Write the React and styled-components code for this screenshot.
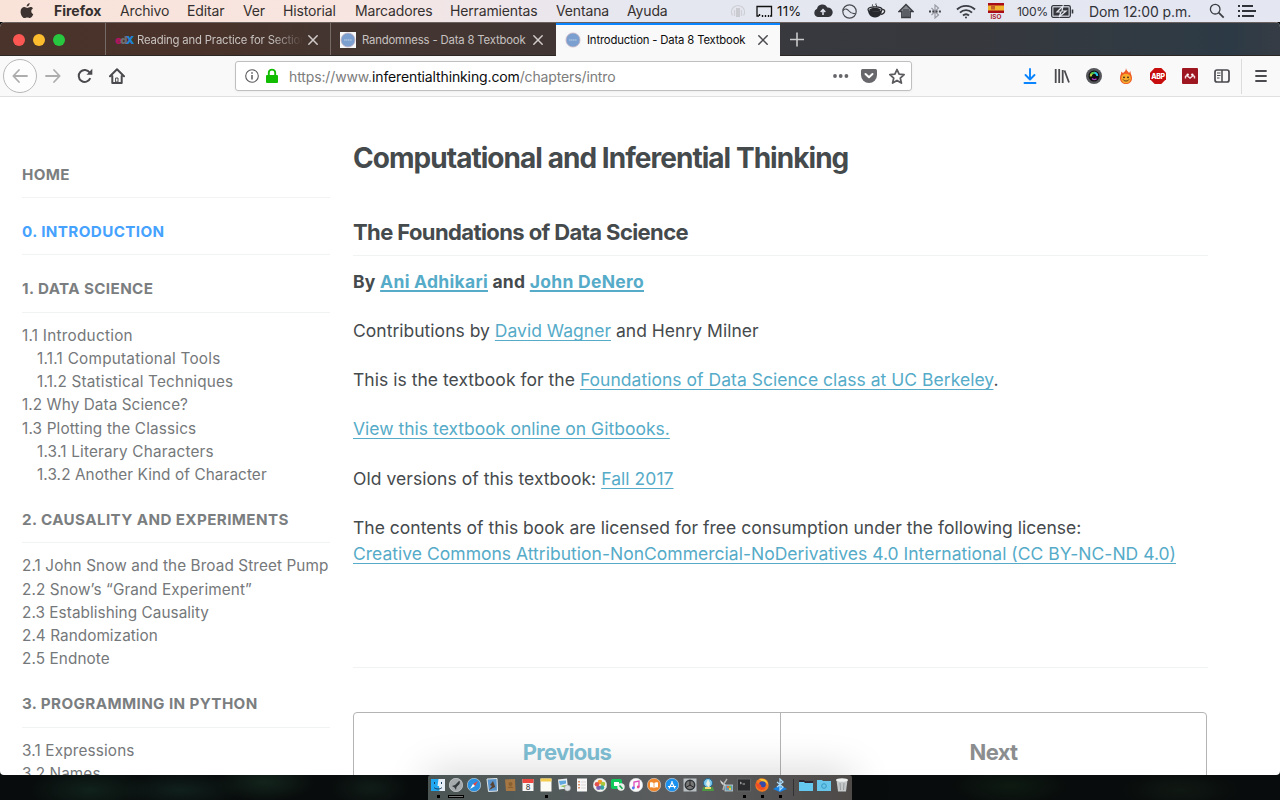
import React from "react";
import styled, { createGlobalStyle } from "styled-components";

const Global = createGlobalStyle`
  * { box-sizing: border-box; }
  body { margin: 0; background: #080d0c; font-family: Inter, "Liberation Sans", sans-serif; overflow: hidden; }
  svg { display: block; flex: none; }
`;

const Desktop = styled.div`
  position: relative;
  width: 1280px;
  height: 800px;
  overflow: hidden;
  display: flex;
  flex-direction: column;
  background:
    radial-gradient(ellipse 60px 22px at 90px 790px, #10211b, transparent),
    radial-gradient(ellipse 50px 20px at 265px 782px, #13241c, transparent),
    radial-gradient(ellipse 60px 18px at 180px 790px, #10201c, transparent),
    radial-gradient(ellipse 40px 20px at 370px 788px, #101c18, transparent),
    radial-gradient(ellipse 60px 20px at 1010px 786px, #0e1a12, transparent),
    radial-gradient(ellipse 60px 20px at 1180px 790px, #101813, transparent),
    #080c0c;
`;

const MenuBar = styled.header`
  height: 22px;
  flex: none;
  display: flex;
  align-items: center;
  background: linear-gradient(90deg, #f9e3d9 0, #f8e5e0 330px, #eee6ea 500px, #e5e7f0 640px, #e4e7f1 100%);
  color: #35302f;
`;

const Slot = styled.div`
  width: ${(p) => p.$w}px;
  flex: none;
  display: flex;
  align-items: center;
  white-space: nowrap;
`;

const AppleSlot = styled(Slot)`
  padding-left: 20px;
`;

const MenuItem = styled(Slot)`
  font-size: 14px;
  font-weight: ${(p) => (p.$bold ? 700 : 400)};
  letter-spacing: ${(p) => p.$ls ?? 0}px;
  line-height: 22px;
`;

const StatusText = styled(Slot)`
  font-size: ${(p) => p.$size ?? 14}px;
  letter-spacing: ${(p) => p.$ls ?? 0}px;
  color: ${(p) => p.$color ?? "#303239"};
`;

const Window = styled.main`
  height: 753px;
  flex: none;
  display: flex;
  flex-direction: column;
  border-radius: 5px 5px 4px 4px;
  overflow: hidden;
  background: #fff;
`;

const TabStrip = styled.div`
  height: 34px;
  flex: none;
  display: flex;
  border-top: 1px solid #6b6260;
  border-bottom: 1px solid #2b2725;
  background: linear-gradient(90deg, #4a332a 0, #493229 200px, #443530 330px, #413634 556px, #38393e 790px, #37383d 960px, #303a43 1150px, #2c3a45 1230px, #363c45 100%);
`;

const Lights = styled.div`
  width: 105px;
  display: flex;
  align-items: center;
  gap: 8px;
  padding: 2px 0 0 13px;
`;

const Light = styled.i`
  width: 12px;
  height: 12px;
  border-radius: 50%;
  background: ${(p) => p.$c};
`;

const Tab = styled.div`
  width: ${(p) => (p.$active ? 224 : 225)}px;
  margin-left: ${(p) => (p.$active ? 1 : 0)}px;
  height: ${(p) => (p.$active ? 33 : 32)}px;
  flex: none;
  display: flex;
  align-items: center;
  padding: ${(p) => (p.$active ? "0 0 1px 9px" : "2px 0 0 9px")};
  font-size: 11.3px;
  letter-spacing: -0.16px;
  color: ${(p) => (p.$active ? "#0c0c0d" : "#c7c2c0")};
  background: ${(p) => (p.$active ? "#f9f9f9" : "transparent")};
  border-left: ${(p) => (p.$active ? 0 : "1px solid #766a66")};
  border-top: ${(p) => (p.$active ? "2px solid #0a84ff" : 0)};
`;

const TabTitle = styled.span`
  width: 166px;
  margin: 0 4px 0 6px;
  overflow: hidden;
  white-space: nowrap;
  line-height: 18px;
  mask-image: ${(p) => (p.$fade ? "linear-gradient(90deg, #000 135px, transparent 166px)" : "none")};
`;

const EdxMark = styled.span`
  display: flex;
  width: 16px;
  font-size: 11px;
  font-weight: 800;
  letter-spacing: -1.5px;
  b:nth-child(1) { color: #b2155f; }
  b:nth-child(2) { color: #6a6d70; }
  b:nth-child(3) { color: #1f82d2; }
`;

const Toolbar = styled.div`
  height: 41px;
  flex: none;
  display: flex;
  align-items: center;
  background: #f9f9f9;
  border-bottom: 1px solid #e0e0e0;
  padding-left: 3px;
`;

const BackButton = styled.div`
  width: 34px;
  height: 34px;
  border-radius: 50%;
  border: 1px solid #b7b7b7;
  background: #fdfdfd;
  display: grid;
  place-items: center;
  margin-right: 8px;
`;

const AddressBar = styled.div`
  width: 677px;
  height: 30px;
  border: 1px solid #bfbfbf;
  border-radius: 3px;
  background: #fff;
  display: flex;
  align-items: center;
  padding-left: 9px;
  margin-right: 110px;
  box-shadow: 0 1px 3px rgba(0, 0, 0, 0.05);
`;

const Url = styled.span`
  width: 543px;
  font-size: 14px;
  letter-spacing: -0.13px;
  color: #7c7c7c;
  padding-top: 1px;
  white-space: nowrap;
  b { font-weight: 400; color: #0c0c0d; }
`;

const Separator = styled.i`
  width: 1px;
  height: 35px;
  background: #dcdcdc;
  margin-right: 13px;
`;

const Page = styled.div`
  flex: 1;
  min-height: 0;
  display: flex;
  overflow: hidden;
`;

const Sidebar = styled.nav`
  width: 331px;
  flex: none;
  padding: 65.8px 1px 0 22px;
`;

const Chapter = styled.div`
  height: 35.2px;
  margin-bottom: ${(p) => (p.$open ? 11.2 : 22.1)}px;
  border-bottom: 1px solid #f1f2f2;
  font-size: 15.2px;
  line-height: 23.2px;
  font-weight: 700;
  letter-spacing: 0.39px;
  color: ${(p) => (p.$current ? "#45a2ff" : "#7b7e80")};
  white-space: nowrap;
`;

const Sections = styled.div`
  margin-bottom: 21.9px;
`;

const Section = styled.div`
  padding-left: ${(p) => (p.$nested ? 15 : 0)}px;
  font-size: 15.3px;
  line-height: 23.2px;
  letter-spacing: ${(p) => p.$ls}px;
  color: #75787a;
  white-space: nowrap;
`;

const Article = styled.article`
  width: 855px;
  margin-left: 22px;
  flex: none;
  color: #454a4d;
`;

const Title = styled.h1`
  margin: 43px 0 0;
  font-size: 28px;
  line-height: 36px;
  letter-spacing: -0.96px;
  font-weight: 700;
  white-space: nowrap;
`;

const Subtitle = styled.h2`
  margin: 41px 0 0;
  height: 39px;
  font-size: 22px;
  line-height: 30px;
  font-weight: 700;
  letter-spacing: -0.6px;
  border-bottom: 1px solid #f1f2f2;
`;

const Para = styled.p`
  margin: 0 0 23.2px;
  font-size: 17.5px;
  line-height: 26px;
  font-weight: 400;
  letter-spacing: ${(p) => p.$ls ?? 0.015}px;
  white-space: nowrap;
`;

const Byline = styled(Para)`
  margin-top: 12.8px;
  font-weight: 700;
  letter-spacing: 0.28px;
`;

const Link = styled.a`
  color: #55abc8;
  text-decoration: underline;
  text-decoration-thickness: ${(p) => (p.$bold ? 2 : 1)}px;
  text-underline-offset: ${(p) => (p.$bold ? 2 : 3)}px;
  text-decoration-skip-ink: none;
`;

const Rule = styled.hr`
  border: 0;
  height: 1px;
  background: #f1f2f2;
  margin: 100.2px 0 44px;
`;

const Pager = styled.div`
  display: flex;
  width: 854px;
  height: 80px;
  border: 1px solid #b4b4b4;
  border-radius: 4px;
`;

const PagerLink = styled.div`
  width: ${(p) => p.$w}px;
  text-align: center;
  line-height: 79px;
  font-size: 22px;
  font-weight: 700;
  letter-spacing: -0.7px;
  color: ${(p) => p.$c};
  border-right: ${(p) => (p.$divided ? "1px solid #b4b4b4" : 0)};
`;

const Dock = styled.footer`
  position: absolute;
  left: 428px;
  bottom: 0;
  width: 424px;
  height: 25px;
  display: flex;
  padding: 3px 0 0 1px;
  border-radius: 3px 3px 0 0;
  background: linear-gradient(90deg, #4b5553, #525a5a 25%, #5b5c5e 60%, #4d4a48);
  box-shadow: 0 0 42px rgba(0, 0, 0, 0.22);
`;

const DockItem = styled.div`
  width: 18px;
  display: flex;
  flex-direction: column;
  align-items: center;
  gap: 3px;
`;

const Indicator = styled.i`
  width: ${(p) => (p.$wide ? 16 : 3)}px;
  height: 3px;
  border: 1px solid #000;
  background: ${(p) => (p.$wide ? "#777" : "#000")};
`;

const DockDivider = styled.i`
  width: 1px;
  height: 17px;
  margin: 1px 3px 0 4px;
  background: #303233;
`;

const Svg = ({ w = 16, h = w, vb, children, ...rest }) => (
  <svg width={w} height={h} viewBox={vb ?? `0 0 ${w} ${h}`} fill="none" {...rest}>{children}</svg>
);

const Close = ({ c }) => (
  <Svg w={12} stroke={c} strokeWidth="1.5" strokeLinecap="round"><path d="M1.800 1.800l8.400 8.400M10.200 1.800l-8.400 8.400" /></Svg>
);

const BookMark = () => (
  <Svg>
    <rect width="16" height="16" fill="#f6f7f9" />
    <circle cx="8" cy="8" r="7" fill="#7b9fcf" stroke="#c5b3c0" strokeWidth=".8" />
    <path d="M4 8h8" stroke="#a9c0de" strokeWidth="1.600" strokeDasharray="1.6 .4" />
  </Svg>
);

const Apple = () => (
  <Svg w={14} h={16} vb="0 0 14 16">
    <path d="M9.7 0c.1 1.700-1.300 3.500-3 3.500C6.500 1.900 8 .2 9.700 0zM12.900 5.400c-2.400 1.500-2 4.600.4 5.700-.7 1.900-1.900 3.900-3.300 3.900-1 0-1.400-.6-2.700-.6s-1.700.6-2.700.6C2.600 15.100.6 11.700.6 8.700.6 5.700 2.500 4.100 4.400 4.100c1.200 0 2.100.8 2.900.8.8 0 1.800-.9 3.300-.9 1 0 1.800.5 2.300 1.400z" fill="#3c3230" />
  </Svg>
);

const MENUS = [
  ["Archivo", 67], ["Editar", 56], ["Ver", 40], ["Historial", 72], ["Marcadores", 95],
  ["Herramientas", 106], ["Ventana", 71], ["Ayuda", 103],
];

const Status = () => (
  <>
    <Slot $w={26}>
      <Svg w={16} stroke="#cfd0d6" strokeWidth="1.300"><path d="M2.500 12.500A6.500 6.500 0 1 1 13.500 12.500" /><path d="M4.500 7v6M11.500 7v6" /><rect x="6" y="5" width="4" height="9" fill="#c9cbd1" stroke="none" /></Svg>
    </Slot>
    <Slot $w={21}>
      <Svg w={17} h={13} stroke="#111"><path d="M3 11H1V1.500h14.500V11H14" strokeWidth="1.300" /><path d="M3.500 9v2M6.500 10v2M9.500 10v2M12.500 10v2" strokeWidth="1.400" /></Svg>
    </Slot>
    <StatusText $w={36} $size={13.2} $ls={0.3} $color="#111">11%</StatusText>
    <Slot $w={29}>
      <Svg w={20} h={14}><path d="M4.800 13A4.300 4.300 0 0 1 4 4.800 5.500 5.500 0 0 1 14.300 3.500 4.600 4.600 0 0 1 15.500 13z" fill="#33353b" /><path d="M10 11V6M7.700 8L10 5.600 12.300 8" stroke="#e6e8f1" strokeWidth="1.500" /></Svg>
    </Slot>
    <Slot $w={25}>
      <Svg w={15} stroke="#4a4c52" strokeWidth="1.200"><circle cx="7.500" cy="7.500" r="6.700" /><path d="M1 6.500c2.500-2.500 4.500-1.500 6 .5s3.500 3 6.500 2.500" /></Svg>
    </Slot>
    <Slot $w={31}>
      <Svg w={19} h={16}><path d="M1 6.500c0 4 2 8 7 8s7-4 7-8z" fill="#26282c" /><ellipse cx="8" cy="6.500" rx="7" ry="2.600" fill="#e3e6ef" stroke="#26282c" strokeWidth="1.200" /><ellipse cx="8" cy="6.800" rx="5.800" ry="2" fill="#26282c" /><path d="M15 6.500c4-.5 3.500 4.500-1.500 5" stroke="#333" strokeWidth="1.300" /><path d="M5.500 1.500c-1 1 1.500 1.500.5 3M9 .5c-1 1 1.500 2 .5 3.500" stroke="#333" /></Svg>
    </Slot>
    <Slot $w={31}>
      <Svg w={16}><path d="M1 8.500L8 1.500l7 7h-2.800v6H3.800v-6z" fill="#85888f" stroke="#3b3d43" strokeWidth="1.400" /><path d="M5 7h6M5 9h6M5 11h6M5 13h6" stroke="#33353a" /></Svg>
    </Slot>
    <Slot $w={27}>
      <Svg w={12} h={15} stroke="#9a9ca4" strokeWidth="1.200"><path d="M2.500 4l7 7L6 14V1l3.500 3-7 7" /><path d="M0 7.500h12" stroke="#44464c" strokeWidth="2" strokeDasharray="2 1.300" /></Svg>
    </Slot>
    <Slot $w={32}>
      <Svg w={20} h={15} stroke="#3b3d43" strokeWidth="1.900"><path d="M1 5.500a13 13 0 0 1 18 0M4 8.600a8.500 8.500 0 0 1 12 0M7 11.500a4.500 4.500 0 0 1 6 0" /><circle cx="10" cy="13.500" r="1" fill="#3b3d43" stroke="none" /></Svg>
    </Slot>
    <Slot $w={29}>
      <Svg w={16} h={18}><rect y="1" width="16" height="10" fill="#a80c18" /><rect y="3.500" width="16" height="5" fill="#f0b52e" /><path d="M3 4h4v3.500H3z" fill="#c4622a" /><text x="8" y="17" textAnchor="middle" fontSize="6.400" fontWeight="700" fill="#a81b2a">ISO</text></Svg>
    </Slot>
    <StatusText $w={34} $size={12.2} $ls={-0.35}>100%</StatusText>
    <Slot $w={38}>
      <Svg w={23} h={13}><rect x=".7" y=".7" width="18.600" height="11.600" rx="1.500" stroke="#34363c" strokeWidth="1.300" /><rect x="2.400" y="2.400" width="15.200" height="8.200" fill="#34363c" /><path d="M12 1L6 7h4l-2 5 7-6h-4z" fill="#34363c" stroke="#e5e8f1" strokeWidth="1.200" /><path d="M21.500 4.500v4" stroke="#34363c" strokeWidth="1.600" /></Svg>
    </Slot>
    <StatusText $w={120} $ls={-0.1}>Dom 12:00 p.m.</StatusText>
    <Slot $w={29}>
      <Svg w={16} stroke="#3b3d43" strokeWidth="1.300"><circle cx="6.200" cy="6.200" r="4.800" /><path d="M9.700 9.700l5 5" strokeWidth="1.800" /></Svg>
    </Slot>
    <Svg w={18} h={12} stroke="#303239" strokeWidth="1.800"><path d="M0 1h2M4 1h11M0 6h2M4 6h14M0 11h2M4 11h12" /></Svg>
  </>
);

const Arrow = ({ flip }) => (
  <Svg stroke="#adadad" strokeWidth="1.800" strokeLinecap="round" strokeLinejoin="round">
    <path d={flip ? "M1 8h13.500M9 2l5.700 6L9 14" : "M15 8H1.500M7 2L1.300 8 7 14"} />
  </Svg>
);

const Extensions = () => (
  <>
    <Slot $w={32}>
      <Svg stroke="#0a84ff" strokeWidth="1.900" strokeLinecap="round" strokeLinejoin="round"><path d="M8 1v10M3.500 7L8 11.500 12.500 7M2.500 15h11" /></Svg>
    </Slot>
    <Slot $w={32}>
      <Svg stroke="#4a4a4f" strokeWidth="1.800"><path d="M1.700 1v14M5.200 1v14M8.700 2v13M10.500 2.500L15 14.500" /></Svg>
    </Slot>
    <Slot $w={32}>
      <Svg><circle cx="8" cy="8" r="8" fill="#55575b" /><circle cx="8" cy="8" r="5.500" fill="#111" /><path d="M4.800 8.500A3.300 3.300 0 0 1 7 5" stroke="#b8c83a" strokeWidth="2" /><path d="M5.500 6A3.300 3.300 0 0 1 9 4.800" stroke="#47c84e" strokeWidth="2" /><path d="M8.500 4.800A3.300 3.300 0 0 1 11.300 8" stroke="#29c5e8" strokeWidth="1.900" /><path d="M6 10.500a3.500 3.500 0 0 0 4.500 .3" stroke="#b335c3" strokeWidth="1.300" /></Svg>
    </Slot>
    <Slot $w={32}>
      <Svg><path d="M8 0c.5 3 2 3 3 5l1.500-2c-.3 3 1.500 4 1.500 7 0 4-3 6-6 6s-6-2-6-6c0-3 1.500-4 1.200-6.500L5 5c1-1 3-2 3-5z" fill="#ef5a24" /><circle cx="8" cy="10.500" r="4.800" fill="#f7ac2e" /><circle cx="6" cy="9.300" r=".9" fill="#392016" /><circle cx="10" cy="9.300" r=".9" fill="#392016" /><path d="M5 11.500c1.500 2 4.500 2 6 0" stroke="#633014" /></Svg>
    </Slot>
    <Slot $w={32}>
      <Svg><path d="M4.700 0h6.600L16 4.700v6.600L11.300 16H4.700L0 11.300V4.700z" fill="#c70d0d" /><text x="8" y="10.700" textAnchor="middle" fontSize="7" fontWeight="800" letterSpacing="-.3" fill="#fff">ABP</text></Svg>
    </Slot>
    <Slot $w={32}>
      <Svg><rect width="16" height="16" rx="1" fill="#9d1620" /><path d="M3.500 10.500V8.500q1.500-1.500 2.500 0l2 1.500 2-1.500q1-1.500 2.500 0v2" stroke="#f4dcde" strokeWidth="1.400" /><circle cx="5.700" cy="6.600" r="1.200" fill="#fff" /><circle cx="10.300" cy="6.600" r="1.200" fill="#fff" /></Svg>
    </Slot>
    <Slot $w={27}>
      <Svg stroke="#4a4a4f"><rect x="1" y="2" width="14" height="12" rx="2" strokeWidth="1.700" /><path d="M8 2v12" strokeWidth="1.500" /><path d="M3 5h3.500M3 7.500h3.500M3 10h2.500" /></Svg>
    </Slot>
    <Separator />
    <Svg w={12} h={12} stroke="#4a4a4f" strokeWidth="1.800" strokeLinecap="round"><path d="M1 1h10M1 6h10M1 11h10" /></Svg>
  </>
);

const CHAPTERS = [
  { title: "HOME" },
  { title: "0. INTRODUCTION", current: true },
  {
    title: "1. DATA SCIENCE",
    items: [
      ["1.1 Introduction", 0.26], ["1.1.1 Computational Tools", 0.25, true], ["1.1.2 Statistical Techniques", 0.17, true],
      ["1.2 Why Data Science?", 0.08], ["1.3 Plotting the Classics", 0.17], ["1.3.1 Literary Characters", 0.2, true],
      ["1.3.2 Another Kind of Character", 0.1, true],
    ],
  },
  {
    title: "2. CAUSALITY AND EXPERIMENTS",
    items: [
      ["2.1 John Snow and the Broad Street Pump", 0.1], ["2.2 Snow’s “Grand Experiment”", 0.11],
      ["2.3 Establishing Causality", 0.07], ["2.4 Randomization", 0.06], ["2.5 Endnote", 0.1],
    ],
  },
  { title: "3. PROGRAMMING IN PYTHON", items: [["3.1 Expressions", 0.16], ["3.2 Names", 0.1]] },
];

const disc = (fill) => <circle cx="7" cy="7" r="6.700" fill={fill} stroke="#dadde0" strokeWidth=".6" />;

const DOCK = [
  { art: <><rect y="1" width="14" height="12" fill="#21a8f0" /><path d="M7.500 1H14v12H8.500L8 8H6.500z" fill="#e4edf5" /><path d="M3.500 4v2M10.500 4v2M3 9.500c2 2 6 2 8 0" stroke="#17405f" /></>, dot: true },
  { art: <>{disc("#a4a9ac")}<path d="M3 8l3-1 4-4 1 .5-.5 2.500-3 3L7 12 5.500 9.500z" fill="#32383c" /></>, wide: true },
  { art: <>{disc("#2a91e2")}<path d="M11 3L8 8 6 6z" fill="#ed4440" /><path d="M3 11l3-5 2 2z" fill="#fff" /></> },
  { art: <><path d="M2 1l10-.500.500 12.500-9 .5z" fill="#5893cb" stroke="#dfe4e6" /><path d="M8 3L5 7l2 1-3 4 6-3 1 2z" fill="#5b4434" /></> },
  { art: <><path d="M2 1.500l10-.5.500 12H3z" fill="#a77743" /><circle cx="7.500" cy="6" r="2" fill="#89602f" /><path d="M4.500 10c1-2 5-2 6 0" fill="#89602f" /></> },
  { art: <><rect x="1.500" y="1" width="11" height="12" fill="#f5f5f5" /><path d="M1.500 1h11v4h-11z" fill="#ec463f" /><text x="7" y="12" textAnchor="middle" fontSize="7.500" fill="#222">8</text></> },
  { art: <><rect x="1.500" y=".5" width="11" height="13" fill="#fbfaf3" /><path d="M1.500.5h11v3h-11z" fill="#f5cd4e" /></>, dot: true },
  { art: <><path d="M1 1.500l9-1 1 10-9 1z" fill="#e9eef0" /><path d="M2 3l7-.5v3L3 7z" fill="#61a8df" /><path d="M3 8l6-1v3z" fill="#90c35c" /><circle cx="10.500" cy="10" r="3" fill="#dfe2e4" stroke="#999" strokeWidth=".5" /></> },
  { art: <><rect x="2" y=".5" width="10" height="13" fill="#f7f7f7" /><path d="M4 3v8" stroke="#d97949" strokeWidth="1.500" strokeDasharray="1.500 1.500" /><path d="M6 4h5M6 7h5M6 10h5" stroke="#ccc" strokeWidth=".7" /></> },
  { art: <>{disc("#f5f3ee")}<circle cx="7" cy="4" r="2.300" fill="#f39c2d" /><circle cx="10" cy="6" r="2.300" fill="#a9c83d" /><circle cx="9" cy="9.500" r="2.300" fill="#35a6a0" /><circle cx="5.500" cy="9.700" r="2.300" fill="#7a61b4" /><circle cx="4" cy="6.300" r="2.300" fill="#e4504c" /></> },
  { art: <><rect y="1" width="11" height="10" rx="2" fill="#10ca5b" /><path d="M3 4h5v4H3z" fill="#fff" /><circle cx="10" cy="9" r="3.700" fill="#e8f2e9" /><path d="M8.500 7.500l3 3.300" stroke="#10a74c" strokeWidth="1.500" /></> },
  { art: <>{disc("#fafafa")}<path d="M5 10V4l5-1v6" stroke="#dc4dba" strokeWidth="1.300" /><circle cx="4.300" cy="10" r="1.400" fill="#517bf0" /><circle cx="9.200" cy="9" r="1.400" fill="#e94d95" /></> },
  { art: <>{disc("#f0872c")}<path d="M3 4.500c2-.5 3 0 4 .7 1-.7 2-1.200 4-.7v5c-2-.5-3 0-4 .7-1-.7-2-1.200-4-.7z" fill="#fff" /><path d="M7 5v5" stroke="#f0872c" strokeWidth=".7" /></> },
  { art: <>{disc("#1b91ef")}<path d="M4 10.500L7.500 3.500M6.500 3.500L10 10.500M3 8.500h8" stroke="#fff" strokeWidth="1.200" /></> },
  { art: <><rect x=".5" y=".5" width="13" height="13" fill="#b9bfc2" /><circle cx="7" cy="7" r="4.700" fill="#777" stroke="#303538" strokeWidth="1.500" /><path d="M7 7V2.500M7 7l4 2.500M7 7l-4 2.500" stroke="#222" /></> },
  { art: <><circle cx="7" cy="5" r="4.500" fill="#81c9ec" stroke="#23688e" /><path d="M7 1l2 4-1 5-3-4z" fill="#e7f2e4" /><path d="M2 9h10l1 4H1z" fill="#4d9644" /><path d="M4 9h6v2H4z" fill="#f2dc72" /></> },
  { art: <><path d="M1 2c1 4 3 6 7 6z" fill="#d6d8d8" /><path d="M4 7l4-6M5 8l-1 4" stroke="#b1b3b3" strokeWidth="1.400" /><rect x="6" y="7" width="8" height="6" fill="#5e98b2" stroke="#d9dedf" strokeWidth=".7" /><path d="M8 8h2v2H8z" fill="#ed6c3d" /><path d="M10 8h2v2h-2z" fill="#78bf49" /><path d="M10 10h2v2h-2z" fill="#f2c844" /></> },
  { art: <><rect x=".5" y="1" width="13" height="12" fill="#292b2c" stroke="#606465" /><path d="M3 4l1.500 1L3 6M5.500 6H8" stroke="#d0d2d2" strokeWidth=".8" /></>, dot: true },
  { art: <><circle cx="7" cy="7" r="6.700" fill="#f57720" /><path d="M4 1c4-1 9 1 9 6-1-2-2-3-5-3z" fill="#fac832" /><circle cx="7.500" cy="6.500" r="3.300" fill="#334aaa" /><path d="M1 3c0 3 3 2 5 4 0 3 3 3 5 2-2 5-9 3-10-2z" fill="#ef4d26" /></>, dot: true },
  { art: <><path d="M7 7l7 4-7 3-7-3z" fill="#1982e2" /><path d="M4 4l6 5-3 3V1l3 3-6 5" stroke="#a9dafa" strokeWidth="1.300" /></>, dot: true },
  { divider: true },
  { art: <><path d="M0 2h5l1 1h8v10H0z" fill="#2f2833" /><path d="M0 4h5l1 1h8v8H0z" fill="#65c8ef" /></> },
  { art: <><path d="M0 2h5l1 1h8v10H0z" fill="#67c6e9" /><circle cx="7" cy="8" r="2.300" stroke="#3898c1" /></> },
  { art: <><path d="M1.500 2h11l-1.500 11.500H3z" fill="#c4c8c9" /><ellipse cx="7" cy="2" rx="6" ry="1.700" fill="#eef0f0" /><path d="M5 5l.5 7M9 5l-.5 7" stroke="#969b9d" /></> },
];

export default function App() {
  return (
    <Desktop>
      <Global />
      <MenuBar>
        <AppleSlot $w={54}><Apple /></AppleSlot>
        <MenuItem $w={66} $bold $ls={0}>Firefox</MenuItem>
        {MENUS.map(([name, w]) => <MenuItem key={name} $w={w} $ls={-0.15}>{name}</MenuItem>)}
        <Status />
      </MenuBar>
      <Window>
        <TabStrip>
          <Lights><Light $c="#fc5753" /><Light $c="#fdbc2e" /><Light $c="#27c83f" /></Lights>
          <Tab>
            <EdxMark><b>e</b><b>d</b><b>X</b></EdxMark>
            <TabTitle $fade>Reading and Practice for Section</TabTitle>
            <Close c="#d0cbc9" />
          </Tab>
          <Tab><BookMark /><TabTitle>Randomness - Data 8 Textbook</TabTitle><Close c="#d0cbc9" /></Tab>
          <Tab $active><BookMark /><TabTitle>Introduction - Data 8 Textbook</TabTitle><Close c="#4a4a4f" /></Tab>
          <Svg w={34} h={32} stroke="#c9cacc" strokeWidth="1.600"><path d="M17 9.500v14M10 16.500h14" /></Svg>
        </TabStrip>
        <Toolbar>
          <BackButton><Arrow /></BackButton>
          <Slot $w={32}><Arrow flip /></Slot>
          <Slot $w={32}>
            <Svg stroke="#4a4a4f" strokeWidth="2"><path d="M13.300 10.200A6 6 0 1 1 12.700 4.500" /><path d="M15.300.8v6H9.500z" fill="#4a4a4f" stroke="none" /></Svg>
          </Slot>
          <Slot $w={126}>
            <Svg stroke="#4a4a4f" strokeWidth="2" strokeLinejoin="round" strokeLinecap="round"><path d="M1 8.300L8 1.300l7 7M3.300 8v7h9.400V8" /><path d="M7 10h2v4H7z" strokeWidth="1" /></Svg>
          </Slot>
          <AddressBar>
            <Slot $w={20}>
              <Svg w={14} stroke="#58585c"><circle cx="7" cy="7" r="6.300" strokeWidth="1.100" /><path d="M7 6v4.500M7 3.300v1.400" strokeWidth="1.500" /></Svg>
            </Slot>
            <Slot $w={24}>
              <Svg w={14} h={16}><path d="M3.800 8V4.800a3.200 3.200 0 0 1 6.400 0V8" stroke="#12bc00" strokeWidth="1.900" /><rect x="1" y="7" width="12" height="8" rx="1" fill="#12bc00" /></Svg>
            </Slot>
            <Url>https://www.<b>inferentialthinking.com</b>/chapters/intro</Url>
            <Slot $w={29}><Svg w={17} h={4}><circle cx="3" cy="2" r="1.900" fill="#66666a" /><circle cx="8.700" cy="2" r="1.900" fill="#66666a" /><circle cx="14.400" cy="2" r="1.900" fill="#66666a" /></Svg></Slot>
            <Slot $w={27}>
              <Svg><path d="M1.500 1h13Q16 1 16 2.500V7A8 8 0 0 1 0 7V2.500Q0 1 1.500 1z" fill="#68686c" /><path d="M4.500 6L8 9.300 11.500 6" stroke="#fff" strokeWidth="2" strokeLinecap="round" strokeLinejoin="round" /></Svg>
            </Slot>
            <Svg w={17} stroke="#5c5c60" strokeWidth="1.800" strokeLinejoin="round"><path d="M9 1.500l2.100 4.700 5 .5-3.800 3.400 1.100 5-4.400-2.600-4.400 2.600 1.100-5L1.900 6.700l5-.5z" /></Svg>
          </AddressBar>
          <Extensions />
        </Toolbar>
        <Page>
          <Sidebar>
            {CHAPTERS.map((c) => (
              <React.Fragment key={c.title}>
                <Chapter $current={c.current} $open={!!c.items}>{c.title}</Chapter>
                {c.items && (
                  <Sections>
                    {c.items.map(([label, ls, nested]) => <Section key={label} $ls={ls} $nested={nested}>{label}</Section>)}
                  </Sections>
                )}
              </React.Fragment>
            ))}
          </Sidebar>
          <Article>
            <Title>Computational and Inferential Thinking</Title>
            <Subtitle>The Foundations of Data Science</Subtitle>
            <Byline>By <Link $bold>Ani Adhikari</Link> and <Link $bold>John DeNero</Link></Byline>
            <Para>Contributions by <Link>David Wagner</Link> and Henry Milner</Para>
            <Para $ls={0.03}>This is the textbook for the <Link>Foundations of Data Science class at UC Berkeley</Link>.</Para>
            <Para><Link>View this textbook online on Gitbooks.</Link></Para>
            <Para $ls={0.05}>Old versions of this textbook: <Link>Fall 2017</Link></Para>
            <Para>
              The contents of this book are licensed for free consumption under the following license:<br />
              <Link>Creative Commons Attribution-NonCommercial-NoDerivatives 4.0 International (CC BY-NC-ND 4.0)</Link>
            </Para>
            <Rule />
            <Pager>
              <PagerLink $w={427} $c="#7fc0d5" $divided>Previous</PagerLink>
              <PagerLink $w={425} $c="#8b8d8f">Next</PagerLink>
            </Pager>
          </Article>
        </Page>
      </Window>
      <Dock>
        {DOCK.map((d, i) => d.divider ? <DockDivider key={i} /> : (
          <DockItem key={i}>
            <Svg w={14}>{d.art}</Svg>
            {(d.dot || d.wide) && <Indicator $wide={d.wide} />}
          </DockItem>
        ))}
      </Dock>
    </Desktop>
  );
}
